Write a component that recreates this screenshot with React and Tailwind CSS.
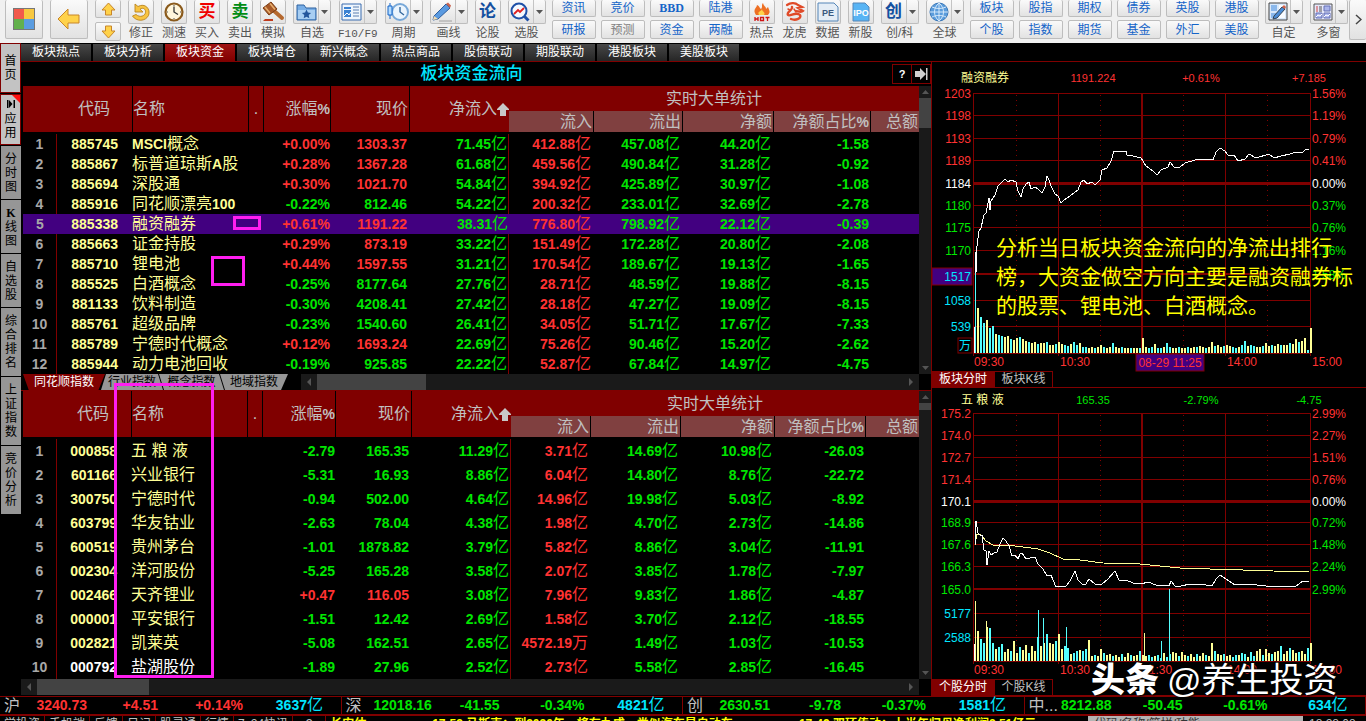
import React from 'react';

const pageTabs = ['板块热点', '板块分析', '板块资金', '板块增仓', '新兴概念', '热点商品', '股债联动', '期股联动', '港股板块', '美股板块'];

const sideTabs = [
  { text: ['分', '时', '图'], h: 'h-[53px]' },
  { text: ['K', '线', '图'], h: 'h-[53px]' },
  { text: ['自', '选', '股'], h: 'h-[53px]' },
  { text: ['综', '合', '排', '名'], h: 'h-[68px]' },
  { text: ['上', '证', '指', '数'], h: 'h-[68px]' },
  { text: ['竞', '价', '分', '析'], h: 'h-[68px]' },
];

const sectors = [
  ['885745', 'MSCI概念', '+0.00%', '1303.37', '71.45亿', '412.88亿', '457.08亿', '44.20亿', '-1.58'],
  ['885867', '标普道琼斯A股', '+0.28%', '1367.28', '61.68亿', '459.56亿', '490.84亿', '31.28亿', '-0.92'],
  ['885694', '深股通', '+0.30%', '1021.70', '54.84亿', '394.92亿', '425.89亿', '30.97亿', '-1.08'],
  ['885916', '同花顺漂亮100', '-0.22%', '812.46', '54.22亿', '200.32亿', '233.01亿', '32.69亿', '-2.78'],
  ['885338', '融资融券', '+0.61%', '1191.22', '38.31亿', '776.80亿', '798.92亿', '22.12亿', '-0.39'],
  ['885663', '证金持股', '+0.29%', '873.19', '33.22亿', '151.49亿', '172.28亿', '20.80亿', '-2.08'],
  ['885710', '锂电池', '+0.44%', '1597.55', '31.21亿', '170.54亿', '189.67亿', '19.13亿', '-1.65'],
  ['885525', '白酒概念', '-0.25%', '8177.64', '27.76亿', '28.71亿', '48.59亿', '19.88亿', '-8.15'],
  ['881133', '饮料制造', '-0.30%', '4208.41', '27.42亿', '28.18亿', '47.27亿', '19.09亿', '-8.15'],
  ['885761', '超级品牌', '-0.23%', '1540.60', '26.41亿', '34.05亿', '51.71亿', '17.67亿', '-7.33'],
  ['885789', '宁德时代概念', '+0.12%', '1693.24', '22.69亿', '75.26亿', '90.46亿', '15.20亿', '-2.62'],
  ['885944', '动力电池回收', '-0.19%', '925.85', '22.22亿', '52.87亿', '67.84亿', '14.97亿', '-4.75'],
];

const stocks = [
  ['000858', '五 粮 液', '-2.79', '165.35', '11.29亿', '3.71亿', '14.69亿', '10.98亿', '-26.03'],
  ['601166', '兴业银行', '-5.31', '16.93', '8.86亿', '6.04亿', '14.80亿', '8.76亿', '-22.72'],
  ['300750', '宁德时代', '-0.94', '502.00', '4.64亿', '14.96亿', '19.98亿', '5.03亿', '-8.92'],
  ['603799', '华友钴业', '-2.63', '78.04', '4.38亿', '1.98亿', '4.70亿', '2.73亿', '-14.86'],
  ['600519', '贵州茅台', '-1.01', '1878.82', '3.79亿', '5.82亿', '8.86亿', '3.04亿', '-11.91'],
  ['002304', '洋河股份', '-5.25', '165.28', '3.58亿', '2.07亿', '3.85亿', '1.78亿', '-7.97'],
  ['002466', '天齐锂业', '+0.47', '116.05', '3.08亿', '7.96亿', '9.83亿', '1.86亿', '-4.87'],
  ['000001', '平安银行', '-1.51', '12.42', '2.69亿', '1.58亿', '3.70亿', '2.12亿', '-18.55'],
  ['002821', '凯莱英', '-5.08', '162.51', '2.65亿', '4572.19万', '1.49亿', '1.03亿', '-10.53'],
  ['000792', '盐湖股份', '-1.89', '27.96', '2.52亿', '2.73亿', '5.58亿', '2.85亿', '-16.45'],
];

const sectorCols = ['w-[34px]', 'w-[75px]', 'w-[116px]', 'w-[15px]', 'w-[67px]', 'w-[79px]', 'w-[100px]', 'w-[84px]', 'w-[89px]', 'w-[91px]', 'w-[97px]', ''];
const stockCols = ['w-[34px]', 'w-[74px]', 'w-[116px]', 'w-[15px]', 'w-[73px]', 'w-[76px]', 'w-[100px]', 'w-[79px]', 'w-[90px]', 'w-[94px]', 'w-[91px]', ''];

const indexes = [
  ['沪', '3240.73', '+4.51', '+0.14%', '3637亿'],
  ['深', '12018.16', '-41.55', '-0.34%', '4821亿'],
  ['创', '2630.51', '-9.78', '-0.37%', '1581亿'],
  ['中...', '8212.88', '-50.45', '-0.61%', '634亿'],
];

const RED = 'text-[#ff3232]';
const GREEN = 'text-[#00e600]';
const tone = (v) => (v.startsWith('-') ? GREEN : RED);

// digits are bold, the trailing unit is a regular full-width glyph
const Num = ({ v }) => {
  const [, digits, unit] = v.match(/^(.*?)([亿万]?)$/);
  return <>{digits}{unit && <span className="text-[16px] leading-4 font-normal">{unit}</span>}</>;
};

/* ---------- toolbar ---------- */

const face = 'border border-[#bdbdbd] bg-gradient-to-b from-[#fafafa] to-[#e2e2e2] rounded-[2px]';

const Caret = () => (
  <span className="w-3 h-full border-l border-[#c4c4c4] flex items-center justify-center">
    <svg width="7" height="4" viewBox="0 0 7 4"><path d="M0 0h7L3.500 4z" fill="#555" /></svg>
  </span>
);

const Tool = ({ label, menu, children }) => (
  <button className="flex flex-col items-center shrink-0 text-[#555] text-[12px] leading-[14px]">
    <span className={`${face} border-t-0 h-6 flex items-center ${menu ? 'w-[38px]' : 'w-[26px]'}`}>
      <span className="flex-1 flex justify-center">{children}</span>
      {menu && <Caret />}
    </span>
    <span className="mt-0.5 whitespace-nowrap">{label}</span>
  </button>
);

const PairGroup = ({ pairs }) => (
  <div className="flex gap-[5px] shrink-0">
    {pairs.map(([a, b]) => (
      <div key={a} className="flex flex-col gap-[3px]">
        <button className={`${face} border-t-0 w-[44px] h-[17px] text-[12px] leading-4 text-[#1464c8] ${a === 'BBD' ? "font-bold font-['Liberation_Serif',serif]" : ''}`}>{a}</button>
        <button className={`${face} w-[44px] h-[19px] text-[12px] leading-4 ${b === '预测' ? 'text-[#808080]' : 'text-[#1464c8]'}`}>{b}</button>
      </div>
    ))}
  </div>
);

const Glyph = ({ c, children }) => <span className={`text-[17px] leading-5 font-bold ${c}`}>{children}</span>;

const ArrowIcon = ({ d, w, h, box }) => (
  <svg width={w} height={h} viewBox={box}><path d={d} fill="#ffd24a" stroke="#c8862a" strokeWidth="1" strokeLinejoin="round" /></svg>
);

const UndoIcon = () => (
  <svg width="20" height="20" viewBox="0 0 20 20">
    <path d="M4 2v8h8L9 7.200C12 5 15 7 14.500 10.500 14 14 9 16 5 12.500L1.500 14c4 6 13 5.500 16-.5C20 7 14 .5 7 4.500z" fill="#f8c440" stroke="#b98420" strokeWidth=".9" />
  </svg>
);

const ClockIcon = ({ rim, inner }) => (
  <svg width="20" height="20" viewBox="0 0 20 20">
    <circle cx="10" cy="10" r="8.500" fill={inner} stroke={rim} strokeWidth="2.200" />
    <path d="M10 4.500V10l4 2.500" fill="none" stroke="#333" strokeWidth="1.300" />
    <path d="M10 3v1M10 16v1M3 10h1M16 10h1" stroke="#555" />
  </svg>
);

const GavelIcon = () => (
  <svg width="24" height="22" viewBox="0 0 24 22">
    <path d="M12 9l9 8" stroke="#b5682e" strokeWidth="4" strokeLinecap="round" />
    <path d="M2 7l8-6 6 7-8 6z" fill="#a85a28" stroke="#7a3c14" />
    <path d="M4 6l5 6M9 2.500l5 6" stroke="#e8b070" strokeWidth="1.500" />
    <path d="M2 20h10v-2H4z" fill="#c03a1c" />
  </svg>
);

const FolderIcon = () => (
  <svg width="21" height="20" viewBox="0 0 21 20">
    <path d="M1 3h7l2 3h10v12H1z" fill="#78aee6" stroke="#2f62a0" />
    <path d="M2 8h17v9H2z" fill="#a8cef2" />
    <path d="M10.500 7.500l1.400 3 3.200.4-2.400 2.200.6 3.200-2.800-1.600-2.800 1.600.6-3.200-2.400-2.200 3.200-.4z" fill="#24569c" />
  </svg>
);

const NewsIcon = () => (
  <svg width="21" height="18" viewBox="0 0 21 18">
    <path d="M1 1h19v16H1z" fill="#eef5fc" stroke="#3a6cb0" />
    <path d="M3 4h7v2H3zM3 7h7v7H3z" fill="#3c82d2" />
    <path d="M12 4h6M12 7h6M12 10h6M12 13h6" stroke="#5a7eb0" />
    <path d="M3 13l3-3 2 2 2-3" stroke="#fff" fill="none" />
  </svg>
);

const PeriodIcon = () => (
  <svg width="22" height="20" viewBox="0 0 22 20">
    <circle cx="13" cy="10" r="8" fill="#eaf4fd" stroke="#78a8d8" strokeWidth="2" />
    <path d="M13 5v5l4 3" fill="none" stroke="#34689c" strokeWidth="1.400" />
    <path d="M3 1v16" stroke="#1464c8" /><path d="M1 4h4v9H1z" fill="#b4dcff" stroke="#1464c8" />
  </svg>
);

const PencilIcon = () => (
  <svg width="21" height="20" viewBox="0 0 21 20">
    <path d="M2 14L14 2l4 4L6 17l-5 1z" fill="#5a9ae0" stroke="#2c5c9c" />
    <path d="M14 2l2-1.500 3 3L18 6z" fill="#c86450" /><path d="M2 14l4 3-5 1z" fill="#f4dcb0" />
    <path d="M7 19h13" stroke="#a0a0a0" />
  </svg>
);

const SearchIcon = () => (
  <svg width="21" height="20" viewBox="0 0 21 20">
    <circle cx="9" cy="9" r="7.500" fill="#f4f9ff" stroke="#1e50a8" strokeWidth="2" />
    <path d="M14.500 14.500l4 4" stroke="#1e50a8" strokeWidth="3" />
    <path d="M4 12l4-4 2 2 4-4" fill="none" stroke="#e02020" strokeWidth="1.800" />
  </svg>
);

const HotIcon = () => (
  <svg width="20" height="20" viewBox="0 0 20 20">
    <path d="M4 13C0 7 5 6 5 3c3 1 2 3 4 4 2-2 0-4 2-6 1 4 3 3 3 6l2-2c1 3 3 5 0 8z" fill="#ee7024" />
    <path d="M7 13c-2-4 2-3 3-6 0 3 4 3 2 6z" fill="#ffd24a" />
    <path d="M3 15v4M3 17h3M6 15v4M8.500 15.500h3v3h-3zM13.500 15.500h4M15.500 15v4" stroke="#d01414" strokeWidth="1.300" fill="none" />
  </svg>
);

const DragonIcon = () => (
  <svg width="20" height="20" viewBox="0 0 20 20" fill="none" stroke="#e04a28" strokeLinecap="round">
    <path d="M2 3c3-2 8-3 11 0l4 2-4 1 5 3c-2 2-5 0-7 0" strokeWidth="2.200" />
    <path d="M7 5c1 3-6 5-4 8 2 2 8-4 12 0 2 3-4 6-9 4" strokeWidth="2.400" />
    <path d="M3 7l2 1M9 7l2 3" strokeWidth="1.500" />
  </svg>
);

const DocIcon = ({ text, w, fill, ink }) => (
  <svg width={w} height="20" viewBox={`0 0 ${w} 20`}>
    <path d={`M1 1h${w - 6}l4 4v14H1z`} fill={fill} stroke="#5486b8" />
    <text x={w / 2} y="14" textAnchor="middle" fontSize="9" fontWeight="bold" fill={ink}>{text}</text>
  </svg>
);

const GlobeIcon = () => (
  <svg width="20" height="20" viewBox="0 0 20 20" fill="none" stroke="#d4e8fa">
    <circle cx="10" cy="10" r="9" fill="#5a9cdc" stroke="#3c78b8" />
    <path d="M1 10h18M10 1v18M3 5c4 2 10 2 14 0M3 15c4-2 10-2 14 0M10 1c-6 5-6 13 0 18M10 1c6 5 6 13 0 18" />
  </svg>
);

const CustomIcon = () => (
  <svg width="20" height="19" viewBox="0 0 20 19">
    <path d="M1 1h18v17H1z" fill="#d8e8fa" stroke="#444" />
    <path d="M3 3h6v6H3zM3 11h6v5H3z" fill="#8ab8ec" /><path d="M11 3h6v13h-6z" fill="#f8fbff" />
    <path d="M6 14L14 5l3 2-8 9-4 1z" fill="#4a8cd8" stroke="#345" /><path d="M14 5l2-2 2 2-1 2z" fill="#d06048" />
  </svg>
);

const WindowsIcon = () => (
  <svg width="20" height="18" viewBox="0 0 20 18">
    <path d="M1 1h18v16H1z" fill="#e6e8fa" stroke="#555" />
    <path d="M3 4h2M3 6h2M3 8h2" stroke="#d04040" /><path d="M6 4h3M6 6h3M6 8h3" stroke="#555" />
    <path d="M11 3h6v5h-6zM3 10h6v5H3zM11 10h6v5h-6z" fill="#aab4ec" stroke="#6470b4" />
    <path d="M3 14l2-2 2 1 2-2M11 14l2-2 2 1 2-2" stroke="#fff" fill="none" />
  </svg>
);

const Toolbar = () => (
  <header className="h-[43px] shrink-0 bg-[#f0f0f0] flex items-start justify-between overflow-hidden">
    <div className="flex gap-1.5 pl-[5px]">
      <div className="flex gap-[7px] shrink-0">
        <button aria-label="首页" className={`${face} border-t-0 w-[38px] h-[39px] flex items-center justify-center`}>
          <svg width="22" height="22" viewBox="0 0 22 22">
            <path d="M0 0h22v22H0z" fill="#777" />
            <path d="M1 1h10v10H1z" fill="#f25a4c" /><path d="M11 1h10v10H11z" fill="#f8c840" />
            <path d="M1 11h10v10H1z" fill="#62b04c" /><path d="M11 11h10v10H11z" fill="#5a9ce0" />
          </svg>
        </button>
        <button aria-label="返回" className={`${face} border-t-0 w-[38px] h-[39px] flex items-center justify-center`}>
          <ArrowIcon w={24} h={22} box="0 0 24 22" d="M1 11L11 1v6h11v8H11v6z" />
        </button>
        <div className="flex flex-col gap-1">
          <button aria-label="上翻" className={`${face} border-t-0 w-[26px] h-[18px] flex items-center justify-center`}>
            <ArrowIcon w={15} h={14} box="0 0 15 14" d="M7.500 1L14 8h-3.500v5h-6V8H1z" />
          </button>
          <button aria-label="下翻" className={`${face} w-[26px] h-[19px] flex items-center justify-center`}>
            <ArrowIcon w={15} h={14} box="0 0 15 14" d="M7.500 13L14 6h-3.500V1h-6v5H1z" />
          </button>
        </div>
        <Tool label="修正"><UndoIcon /></Tool>
        <Tool label="测速"><ClockIcon rim="#8a5a1c" inner="#fff6dc" /></Tool>
        <Tool label="买入"><Glyph c="text-[#f00000]">买</Glyph></Tool>
        <Tool label="卖出"><Glyph c="text-[#008c14]">卖</Glyph></Tool>
        <Tool label="模拟"><GavelIcon /></Tool>
        <Tool label="自选" menu><FolderIcon /></Tool>
        <Tool label={<span className="font-['Liberation_Mono',monospace] text-[11px]">F10/F9</span>} menu><NewsIcon /></Tool>
        <Tool label="周期" menu><PeriodIcon /></Tool>
        <Tool label="画线" menu><PencilIcon /></Tool>
        <Tool label="论股"><Glyph c="text-[#1450a0]">论</Glyph></Tool>
        <Tool label="选股" menu><SearchIcon /></Tool>
      </div>
      <PairGroup pairs={[['资讯', '研报'], ['竞价', '预测'], ['BBD', '资金'], ['陆港', '两融']]} />
      <div className="flex gap-[7px] shrink-0">
        <Tool label="热点"><HotIcon /></Tool>
        <Tool label="龙虎"><DragonIcon /></Tool>
        <Tool label="数据"><DocIcon text="PE" w={22} fill="#e4edf6" ink="#3a5a80" /></Tool>
        <Tool label="新股"><DocIcon text="IPO" w={18} fill="#58b4f4" ink="#fff" /></Tool>
        <Tool label="创/科" menu><Glyph c="text-[#1450a0]">创</Glyph></Tool>
        <Tool label="全球" menu><GlobeIcon /></Tool>
      </div>
      <PairGroup pairs={[['板块', '个股'], ['股指', '指数'], ['期权', '期货'], ['债券', '基金'], ['英股', '外汇'], ['港股', '美股']]} />
      <div className="flex gap-[7px] shrink-0">
        <Tool label="自定" menu><CustomIcon /></Tool>
        <Tool label="多窗" menu><WindowsIcon /></Tool>
      </div>
    </div>
    <button aria-label="更多" className={`${face} border-t-0 border-r-0 w-[17px] h-10 shrink-0 flex items-center justify-center`}>
      <svg width="7" height="11" viewBox="0 0 7 11"><path d="M1 1l5 4.500L1 10" fill="none" stroke="#444" strokeWidth="1.500" /></svg>
    </button>
  </header>
);

/* ---------- side + page tabs ---------- */

const SideBar = () => (
  <nav className="w-[21px] shrink-0 flex flex-col gap-px text-[12px] leading-[14px] text-black">
    <button className="h-[50px] bg-[#c3c3c3] border border-[#800000] flex flex-col items-center justify-center"><span>首</span><span>页</span></button>
    <button className="relative h-[51px] bg-[#c3c3c3] border border-[#800000] flex flex-col items-center justify-center">
      <span className="absolute top-0 right-0 w-2 h-2 bg-[#ff1010] [clip-path:polygon(0_0,100%_0,100%_100%)]" />
      <svg width="8" height="8" viewBox="0 0 8 8" className="mb-1"><path d="M0 0h1.500v8H0zM2 0l3.500 4L2 8zM6.500 0H8v8H6.500z" /></svg>
      <span>应</span><span>用</span>
    </button>
    {sideTabs.map((t) => (
      <button key={t.text.join('')} className={`${t.h} ml-px bg-[#969696] flex flex-col items-center justify-center`}>
        {t.text.map((c) => <span key={c} className={c === 'K' ? "font-bold font-['Liberation_Serif',serif]" : ''}>{c}</span>)}
      </button>
    ))}
  </nav>
);

const PageTabs = () => (
  <nav className="h-[19px] shrink-0 pt-px flex gap-0.5 border-b border-[#800000]">
    {pageTabs.map((t) => (
      <button key={t} className={`w-[70px] text-[12px] leading-[17px] text-white bg-gradient-to-b ${t === '板块资金' ? 'from-[#a01414] to-[#800000]' : 'from-[#484848] to-[#262626]'}`}>{t}</button>
    ))}
  </nav>
);

/* ---------- tables ---------- */

const VScroll = ({ thumb }) => (
  <div className="w-3 shrink-0 bg-[#1a1a1a] flex flex-col items-center justify-between">
    <div className="w-full flex flex-col items-center">
      <svg width="7" height="4" viewBox="0 0 7 4" className="my-1"><path d="M3.500 0L7 4H0z" fill="#555" /></svg>
      <div className={`w-full bg-[#434343] ${thumb}`} />
    </div>
    <svg width="7" height="4" viewBox="0 0 7 4" className="mb-1"><path d="M0 0h7L3.500 4z" fill="#555" /></svg>
  </div>
);

const HScroll = ({ thumb }) => (
  <div className="flex-1 h-4 bg-[#1a1a1a] flex items-center justify-between">
    <div className="h-full flex items-center">
      <svg width="4" height="8" viewBox="0 0 4 8" className="mx-1.5"><path d="M4 0v8L0 4z" fill="#555" /></svg>
      <div className={`h-full bg-[#434343] ${thumb}`} />
    </div>
    <svg width="4" height="8" viewBox="0 0 4 8" className="mx-1.5"><path d="M0 0v8l4-4z" fill="#555" /></svg>
  </div>
);

const top = 'bg-[#800000] border-b-2 border-black font-normal';
const sub = 'bg-[#804040] border-b-2 border-black font-normal text-right pr-px';

const FlowTable = ({ rows, cols, rowClass, active, white }) => (
  <table className="flex-1 min-w-0 table-fixed border-separate border-spacing-0 text-right">
    <colgroup>{cols.map((c, i) => <col key={i} className={c} />)}</colgroup>
    <thead className="text-[16px] leading-5 text-[#c0c0c0] whitespace-nowrap">
      <tr className="h-[25px]">
        <th rowSpan={2} className={top} />
        <th rowSpan={2} className={`${top} pr-[22px]`}>代码</th>
        <th rowSpan={2} className={`${top} border-l text-left`}>名称</th>
        <th rowSpan={2} className={`${top} border-l text-center`}>.</th>
        <th rowSpan={2} className={`${top} border-l`}>涨幅<b className="text-[14px]">%</b></th>
        <th rowSpan={2} className={`${top} border-l pr-px`}>现价</th>
        <th rowSpan={2} className={`${top} border-l`}>
          净流入<svg width="12" height="13" viewBox="0 0 12 13" className="inline align-[-2px]"><path d="M6 0l6 6v1H9v6H3V7H0V6z" fill="#c8c8c8" /></svg>
        </th>
        <th colSpan={5} className="bg-[#800000] font-normal text-center">实时大单统计</th>
      </tr>
      <tr className="h-[23px]">
        <th className={sub}>流入</th>
        <th className={`${sub} border-l`}>流出</th>
        <th className={`${sub} border-l`}>净额</th>
        <th className={`${sub} border-l`}>净额占比<b className="text-[14px]">%</b></th>
        <th className={`${sub} border-l`}>总额</th>
      </tr>
    </thead>
    <tbody className={`text-[14px] leading-5 font-bold whitespace-nowrap ${GREEN}`}>
      {rows.map(([code, name, pct, price, net, inn, out, diff, ratio], i) => {
        const on = i === active;
        const ink = i === white ? 'text-white' : 'text-[#ffff96]';
        const line = on ? '' : 'border-r border-[#800000]';
        return (
          <tr key={code} className={`${rowClass} ${on ? 'bg-[#420080]' : ''}`}>
            <td className={`text-center text-[#a8a8a8] ${line}`}>{i + 1}</td>
            <td className={`pr-[14px] ${ink}`}>{code}</td>
            <td colSpan={2} className={`text-left font-normal text-[16px] ${ink}`}>
              {name.split(/([A-Z0-9]+)/).map((s, k) => (k % 2 ? <b key={k} className="text-[14px] leading-4">{s}</b> : s))}
            </td>
            <td className={tone(pct)}>{pct}</td>
            <td className={`pr-0.5 ${tone(pct)}`}>{price}</td>
            <td className={`pr-px ${line}`}><Num v={net} /></td>
            <td className={`pr-0.5 ${RED}`}><Num v={inn} /></td>
            <td className="pr-0.5"><Num v={out} /></td>
            <td className="pr-0.5"><Num v={diff} /></td>
            <td className="pr-px">{ratio}</td>
            <td />
          </tr>
        );
      })}
    </tbody>
  </table>
);

const groupTabs = [
  ['同花顺指数', 'w-[82px] bg-[#800000] text-white [clip-path:polygon(0_0,100%_0,92%_100%,7%_100%)]'],
  ['行业指数', 'w-[62px] -ml-1 bg-[#969696] text-black [clip-path:polygon(5px_0,57px_0,100%_100%,0_100%)]'],
  ['概念指数', 'w-[65px] -ml-1 bg-[#969696] text-black [clip-path:polygon(0_0,60px_0,100%_100%,5px_100%)]'],
  ['地域指数', 'w-[68px] -ml-1 bg-[#969696] text-black [clip-path:polygon(0_0,100%_0,61px_100%,5px_100%)]'],
];

/* ---------- charts ---------- */

// x positions of the half-hour lines inside the plot
const hours = [0, 85, 252, 337];
const halves = [43, 127, 210, 294];

const barInk = ['#ffff96', '#55ffff', '#ffff96', '#ffff96', '#55ffff', '#55ffff', '#ffff96'];

const Chart = ({ box, size, grid, labels, volume, mid, floor, lines, bars, spikes, children }) => (
  <svg viewBox={box} className={`block w-full overflow-visible ${size}`} fontSize="12" shapeRendering="crispEdges">
    <g stroke="#800000">
      {grid.map((y) => <path key={y} d={`M0 ${y}H337`} />)}
      {hours.map((x) => <path key={x} d={`M${x} 0V${grid[grid.length - 1] + 3}`} />)}
      {halves.map((x) => <path key={x} d={`M${x} 2V${grid[grid.length - 1]}`} strokeDasharray="1 4" />)}
      <path d={`M169 0V${grid[grid.length - 1]}`} strokeWidth="2" />
      <path d={`M0 ${mid}H337`} strokeWidth="3" />
      <path d={`M0 ${floor}H337`} strokeWidth="2" />
    </g>
    {bars.map((h, i) => (
      <rect key={i} x={i * 3 + 1} y={grid[grid.length - 1] - h} width="2" height={h} fill={i ? barInk[(i * 5 + (i % 4)) % 7] : '#fff'} />
    ))}
    {spikes.map(([x, h, c]) => <rect key={x} x={x} y={grid[grid.length - 1] - h} width="1" height={h} fill={c} />)}
    {lines.map(([pts, c]) => <polyline key={c} points={pts} fill="none" stroke={c} />)}
    <g shapeRendering="auto">
      {labels.map(([l, r], i) => {
        const c = i < 4 ? '#ff3232' : i === 4 ? '#fff' : '#00e600';
        return (
          <g key={i} fill={c}>
            <text x="-2" y={grid[i] + 5} textAnchor="end">{l}</text>
            <text x="339" y={grid[i] + 5}>{r}</text>
          </g>
        );
      })}
      {volume.map(([v, y]) => <text key={v} x="-2" y={y + 5} textAnchor="end" fill="#00e6ff">{v}</text>)}
      {children}
    </g>
  </svg>
);

const sectorLine = '2,159 3,180 4,153 6,138 8,135 11,122 13,120 16,105 17,117 18,108 22,102 25,93 28,90 32,86 35,89 38,87 43,89 45,98 48,104 50,96 53,91 56,89 58,96 62,94 65,96 69,100 72,94 74,83 76,87 78,93 82,101 85,103 88,110 91,107 97,103 102,99 105,97 108,89 111,87 114,91 119,89 122,92 127,87 129,77 134,75 138,68 141,58 147,58 153,58 154,62 160,63 168,65 173,73 180,78 184,82 188,77 195,74 197,69 201,74 207,74 212,70 222,67 232,66 240,67 243,59 247,55 252,58 255,62 261,62 265,68 272,66 276,61 283,65 296,61 301,65 308,63 317,61 323,59 329,60 333,56 336,56';
const stockLine = '2,132 3,108 5,120 7,122 9,122 11,137 13,138 14,152 16,138 18,142 21,140 24,139 27,131 30,125 33,128 36,133 39,143 42,142 45,146 47,141 49,140 53,146 62,144 65,151 70,156 74,163 78,162 83,174 87,173 93,173 97,168 102,158 105,167 109,171 113,171 116,166 122,171 128,172 135,166 142,158 146,167 153,167 160,170 168,171 175,169 183,172 196,173 198,168 202,173 208,173 217,171 233,172 239,173 243,166 247,162 253,166 262,172 275,171 293,173 313,173 323,173 330,168 336,168';
const stockAvg = '2,132 4,121 8,122 13,128 20,132 33,132 50,134 65,136 77,140 90,146 107,147 130,150 167,151 187,153 207,155 237,156 270,157 300,158 336,159';

const sectorBars = [26, 45, 36, 30, 33, 25, 27, 19, 18, 17, 16, 17, 14, 13, 15, 16, 14, 12, 11, 10, 11, 9, 10, 10, 11, 8, 8, 9, 11, 9, 8, 7, 9, 11, 8, 10, 6, 6, 5, 6, 5, 6, 8, 6, 5, 6, 10, 6, 5, 6, 5, 5, 5, 5, 5, 5, 15, 6, 5, 6, 9, 5, 5, 6, 10, 6, 5, 5, 6, 5, 5, 6, 5, 6, 6, 7, 6, 5, 6, 11, 7, 8, 6, 7, 8, 7, 6, 5, 6, 8, 12, 7, 8, 7, 6, 6, 7, 10, 7, 8, 7, 9, 8, 8, 8, 10, 9, 14, 11, 12, 15, 3, 25];
const stockBars = [17, 30, 22, 18, 34, 33, 18, 12, 14, 17, 9, 12, 10, 20, 8, 14, 11, 16, 8, 15, 10, 24, 15, 18, 27, 18, 17, 20, 27, 12, 15, 13, 7, 8, 10, 11, 10, 12, 21, 5, 6, 5, 12, 8, 6, 7, 5, 6, 4, 7, 4, 8, 6, 5, 6, 10, 6, 5, 6, 4, 5, 6, 3, 8, 4, 7, 9, 8, 5, 9, 6, 5, 7, 4, 7, 5, 8, 6, 5, 18, 10, 7, 6, 7, 5, 6, 4, 6, 6, 8, 7, 4, 9, 5, 10, 12, 6, 12, 8, 7, 9, 10, 15, 7, 10, 13, 11, 8, 9, 10, 7, 13, 18];

const Quote = ({ cls, name, values, c }) => (
  <div className={`grid grid-cols-[78px_108px_108px_108px] pl-[29px] text-[12px] leading-5 text-center ${cls}`}>
    <span className="text-left text-[#ffff96] whitespace-pre">{name}</span>
    {values.map((v) => <span key={v} className={`text-[11px] ${c}`}>{v}</span>)}
  </div>
);

const ChartTabs = ({ name }) => (
  <div className="h-[17px] shrink-0 flex text-[12px] leading-[15px] border-b border-[#800000]">
    <button className="w-[62px] bg-[#800000] text-white">{name}分时</button>
    <button className="w-[59px] border border-b-0 border-[#800000] text-[#c0c0c0]">{name}K线</button>
  </div>
);

const Times = ({ y, items }) => items.map(([t, x]) => <text key={t} x={x} y={y} fill="#ff3232">{t}</text>);

const ChartPanel = () => (
  <section className="relative w-[434px] shrink-0 flex flex-col">
    <Quote cls="h-[26px] pt-1.5" name="融资融券" values={['1191.224', '+0.61%', '+7.185']} c={RED} />
    <Chart
      box="-41 -5 434 283"
      size="h-[283px]"
      grid={[0, 22, 45, 67, 90, 112, 134, 157, 181, 207, 233, 260]}
      labels={[['1203', '1.56%'], ['1198', '1.19%'], ['1193', '0.79%'], ['1189', '0.41%'], ['1184', '0.00%'], ['1180', '0.37%'], ['1175', '0.76%'], ['1170', '1.16%'], ['', '1.58%']]}
      volume={[['1058', 207], ['539', 233]]}
      mid={90}
      floor={181}
      lines={[[sectorLine, '#fff']]}
      bars={sectorBars}
      spikes={[[2, 80, '#55ffff']]}
    >
      <rect x="-41" y="175" width="40" height="17" fill="#420080" stroke="#800000" />
      <text x="-2" y="188" textAnchor="end" fill="#00e6ff">1517</text>
      <rect x="-15" y="245" width="14" height="15" fill="#000" stroke="#800000" />
      <text x="-2" y="257" textAnchor="end" fill="#00e6ff">万</text>
      <Times y={273} items={[['09:30', 1], ['10:30', 87], ['14:00', 254], ['15:00', 339]]} />
      <rect x="163" y="261" width="68" height="17" fill="#420080" stroke="#800000" />
      <text x="197" y="274" textAnchor="middle" fill="#ff3232">08-29 11:25</text>
    </Chart>
    <ChartTabs name="板块" />
    <Quote cls="h-[22px] pt-0.5" name="五 粮 液" values={['165.35', '-2.79%', '-4.75']} c={GREEN} />
    <Chart
      box="-41 -3 434 269"
      size="h-[269px]"
      grid={[0, 22, 44, 66, 88, 109, 131, 153, 176, 200, 224, 248]}
      labels={[['175.2', '2.99%'], ['174.0', '2.27%'], ['172.7', '1.51%'], ['171.4', '0.76%'], ['170.1', '0.00%'], ['168.9', '0.72%'], ['167.6', '1.48%'], ['166.3', '2.24%'], ['165.0', '2.99%']]}
      volume={[['5177', 200], ['2588', 224]]}
      mid={88}
      floor={176}
      lines={[[stockAvg, '#ffff96'], [stockLine, '#fff']]}
      bars={stockBars}
      spikes={[[2, 60, '#ffff96'], [13, 40, '#ffff96'], [65, 51, '#55ffff'], [70, 43, '#55ffff'], [93, 34, '#55ffff'], [171, 28, '#ffff96'], [188, 20, '#55ffff'], [196, 72, '#55ffff']]}
    >
      <Times y={261} items={[['09:30', 1], ['10:30', 87], ['11:30', 170], ['14:00', 254], ['15:00', 339]]} />
    </Chart>
    <ChartTabs name="个股" />

    <p className="absolute left-[64px] top-[171px] w-[360px] text-[21px] leading-[29px] text-[#ffff00] break-all">
      分析当日板块资金流向的净流出排行<br />榜，大资金做空方向主要是融资融券标<br />的股票、锂电池、白酒概念。
    </p>
    <p className="absolute left-[159px] top-[598px] flex items-center gap-2 text-[34px] leading-10 text-white whitespace-nowrap [text-shadow:1px_1px_2px_#000,-1px_-1px_2px_#000]">
      <b className="font-black">头条</b><span>@养生投资</span>
    </p>
  </section>
);

/* ---------- footer ---------- */

const IndexBar = () => (
  <div className="h-5 shrink-0 flex border-t border-b-2 border-[#800000] text-[14px] leading-[17px] font-bold whitespace-nowrap">
    {indexes.map(([name, price, diff, pct, amount]) => (
      <div key={name} className="flex-1 flex text-right border-r border-[#800000]">
        <span className="w-8 pl-1 text-left text-[16px] font-normal text-[#c0c0c0]">{name}</span>
        <span className={`w-[55px] ${tone(diff)}`}>{price}</span>
        <span className={`w-[71px] ${tone(diff)}`}>{diff}</span>
        <span className={`w-[85px] ${tone(diff)}`}>{pct}</span>
        <span className="w-[80px] text-[#00e6ff]"><Num v={amount} /></span>
      </div>
    ))}
  </div>
);

const Ticker = () => (
  <footer className="h-5 shrink-0 flex text-[12px] leading-4 text-[#c0c0c0] whitespace-nowrap">
    {['学投资', '手机端', '反馈', '日记', '股灵通', '行情', '7x24快讯'].map((t) => (
      <a key={t} href="#" className="px-1 border-r border-[#800000]">{t}</a>
    ))}
    <a href="#" aria-label="帮助" className="w-[33px] text-center border-r border-[#800000]">?</a>
    <div className="flex-1 flex gap-[66px] pl-1 overflow-hidden font-bold text-[#ffff00]">
      <span>长安估</span>
      <span>17:53 马斯克：到2030年，将有九成，类似汽车是自动车</span>
      <span>17:49 双环传动：上半年归母净利润2.51亿元</span>
    </div>
    <input aria-label="代码搜索" placeholder="代码/名称/简拼/功能" className="w-[215px] h-4 pl-1.5 bg-[#b4b4b4] text-black placeholder:text-[#333]" />
    <span className="w-[63px] pl-1.5">18:28:08</span>
  </footer>
);

export default function App() {
  return (
    <div className="h-screen overflow-hidden bg-black flex flex-col font-['Liberation_Sans','Noto_Sans_CJK_SC',sans-serif]">
      <Toolbar />
      <div className="flex shrink-0">
        <SideBar />
        <div className="flex-1 min-w-0 flex flex-col">
          <PageTabs />
          <div className="flex">
            <main className="relative flex-1 min-w-0 border-r border-[#800000]">
              <div className="h-6 flex items-center justify-end">
                <h1 className="flex-1 pl-[30px] text-center text-[17px] leading-6 font-medium text-[#00e6ff]">板块资金流向</h1>
                <button className="w-5 h-5 border border-[#800000] text-[11px] leading-4 font-bold text-white">?</button>
                <button aria-label="展开" className="w-[19px] h-5 border border-l-0 border-[#800000] flex items-center justify-center">
                  <svg width="13" height="12" viewBox="0 0 13 12"><path d="M0 3h5V0l6 6-6 6V9H0zM11 0h1.500v12H11z" fill="#d0d0d0" /></svg>
                </button>
              </div>
              <div className="flex pl-0.5">
                <FlowTable rows={sectors} cols={sectorCols} rowClass="h-5" active={4} />
                <VScroll thumb="h-[30px]" />
              </div>
              <div className="h-[17px] flex border-b border-[#800000]">
                <div className="w-[280px] pl-0.5 flex text-[12px] leading-4">
                  {groupTabs.map(([t, c]) => <button key={t} className={c}>{t}</button>)}
                </div>
                <HScroll thumb="w-[109px]" />
                <div className="w-3" />
              </div>
              <div className="flex pl-0.5">
                <FlowTable rows={stocks} cols={stockCols} rowClass="h-6" white={9} />
                <VScroll thumb="h-[7px]" />
              </div>
              <div className="flex"><HScroll thumb="w-[112px]" /><div className="w-3" /></div>

              <div className="absolute left-[212px] top-[154px] w-[28px] h-[14px] border-3 border-[#ff1ef0]" />
              <div className="absolute left-[190px] top-[194px] w-[34px] h-[30px] border-3 border-[#ff1ef0]" />
              <div className="absolute left-[93px] top-[321px] w-[100px] h-[295px] border-3 border-[#ff1ef0]" />
            </main>
            <ChartPanel />
          </div>
        </div>
      </div>
      <IndexBar />
      <Ticker />
    </div>
  );
}
